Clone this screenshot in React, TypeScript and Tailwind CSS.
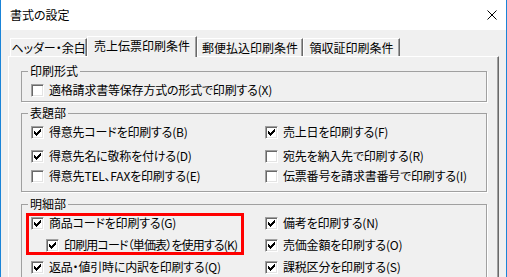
const CHECK = ["......#", ".....##", "#...###", "##.###.", "#####..", ".###...", "..#...."];

function CheckMark() {
  return (
    <svg width="7" height="7" viewBox="0 0 7 7" shapeRendering="crispEdges">
      {CHECK.flatMap((row, y) =>
        row.split("").map((c, x) => (c === "#" ? <rect key={`${x}-${y}`} x={x} y={y} width="1" height="1" fill="#000" /> : null))
      )}
    </svg>
  );
}

function Box({ checked }: { checked: boolean }) {
  return (
    <span className="flex h-[13px] w-[13px] shrink-0 items-center justify-center border border-t-[#a0a0a0] border-l-[#a0a0a0] border-r-white border-b-white bg-white shadow-[inset_1px_1px_0_#696969,inset_-1px_-1px_0_#e3e3e3]">
      {checked && <CheckMark />}
    </span>
  );
}

function Row({
  checked,
  label,
  className = "h-[20px]",
  tight = false,
}: {
  checked: boolean;
  label: string;
  className?: string;
  tight?: boolean;
}) {
  return (
    <div className={`flex items-center gap-[5px] ${className}`}>
      <Box checked={checked} />
      <span className={`whitespace-nowrap leading-none ${tight ? "tracking-[-0.85px]" : "tracking-[-0.2px]"}`}>{label}</span>
    </div>
  );
}

function Group({ title, className, children }: { title: string; className?: string; children: React.ReactNode }) {
  return (
    <fieldset className={`ml-[12px] w-[466px] border border-[#a0a0a0] shadow-[1px_1px_0_#fff] ${className ?? ""}`}>
      <legend className="ml-[6px] px-[2px] leading-[16px]">{title}</legend>
      {children}
    </fieldset>
  );
}

const tabs = [
  { label: "ヘッダー・余白", w: "w-[77px]", active: false },
  { label: "売上伝票印刷条件", w: "w-[110px]", active: true },
  { label: "郵便払込印刷条件", w: "w-[106px]", active: false },
  { label: "領収証印刷条件", w: "w-[97px]", active: false },
];

export default function App() {
  return (
    <div className="flex h-[277px] w-[507px] flex-col overflow-hidden border-x border-[#1a84d8] bg-[#f0f0f0] font-['Noto_Sans_CJK_JP',sans-serif] text-[12px] text-black [font-feature-settings:'palt']">
      <div className="flex h-[30px] shrink-0 items-center justify-between bg-white pl-[9px] pr-[9px]">
        <span className="leading-none">書式の設定</span>
        <svg width="10" height="10" viewBox="0 0 10 10">
          <path d="M0.5 0.5 L9.5 9.5 M9.5 0.5 L0.5 9.5" stroke="#000" strokeWidth="1" />
        </svg>
      </div>

      <div className="flex-1 pl-[7px] pt-[6px]">
        <div className="flex h-[20px] items-end pl-[2px]">
          {tabs.map((t) =>
            t.active ? (
              <div
                key={t.label}
                className={`relative z-10 -mb-px flex h-[21px] ${t.w} items-center justify-center border-l border-t border-r border-l-white border-t-white border-r-[#696969] bg-[#f0f0f0] pb-[3px] shadow-[inset_-1px_0_0_#a0a0a0]`}
              >
                <span className="leading-none">{t.label}</span>
              </div>
            ) : (
              <div
                key={t.label}
                className={`flex h-[18px] ${t.w} items-center justify-center border-l border-t border-r border-l-white border-t-white border-r-[#696969] shadow-[inset_-1px_0_0_#a0a0a0]`}
              >
                <span className="leading-none">{t.label}</span>
              </div>
            )
          )}
        </div>

        <div className="h-[240px] w-[491px] border-l border-t border-r border-l-white border-t-white border-r-[#696969] shadow-[inset_-1px_0_0_#a0a0a0] pt-[6px]">
          <Group title="印刷形式" className="pb-[1px]">
            <div className="pl-[9px]">
              <Row checked={false} label="適格請求書等保存方式の形式で印刷する(X)" className="mt-[1px] h-[20px]" />
            </div>
          </Group>

          <Group title="表題部" className="mt-[3px] pb-[5px]">
            <div className="grid grid-cols-[234px_1fr] pl-[9px]">
              <div className="flex flex-col">
                <Row checked label="得意先コードを印刷する(B)" className="mt-[1px] h-[20px]" />
                <Row checked label="得意先名に敬称を付ける(D)" className="mt-[4px] h-[20px]" />
                <Row checked={false} label="得意先TEL、FAXを印刷する(E)" className="h-[20px]" />
              </div>
              <div className="flex flex-col">
                <Row checked label="売上日を印刷する(F)" className="mt-[1px] h-[20px]" />
                <Row checked={false} label="宛先を納入先で印刷する(R)" className="mt-[4px] h-[20px]" />
                <Row checked={false} label="伝票番号を請求書番号で印刷する(I)" className="h-[20px]" />
              </div>
            </div>
          </Group>

          <Group title="明細部" className="mt-[4px]">
            <div className="grid grid-cols-[234px_1fr] pl-[9px]">
              <div className="relative flex flex-col">
                <Row checked label="商品コードを印刷する(G)" className="h-[22px]" />
                <Row checked tight label="印刷用コード（単価表）を使用する(K)" className="h-[22px] gap-[4px] pl-[15px]" />
                <Row checked label="返品・値引時に内訳を印刷する(Q)" className="h-[22px]" />
                <div className="pointer-events-none absolute -left-[5px] top-[1px] h-[42px] w-[218px] border-[3px] border-[#ff0000]" />
              </div>
              <div className="flex flex-col">
                <Row checked label="備考を印刷する(N)" className="h-[22px]" />
                <Row checked label="売価金額を印刷する(O)" className="h-[22px]" />
                <Row checked label="課税区分を印刷する(S)" className="h-[22px]" />
              </div>
            </div>
          </Group>
        </div>
      </div>
    </div>
  );
}
